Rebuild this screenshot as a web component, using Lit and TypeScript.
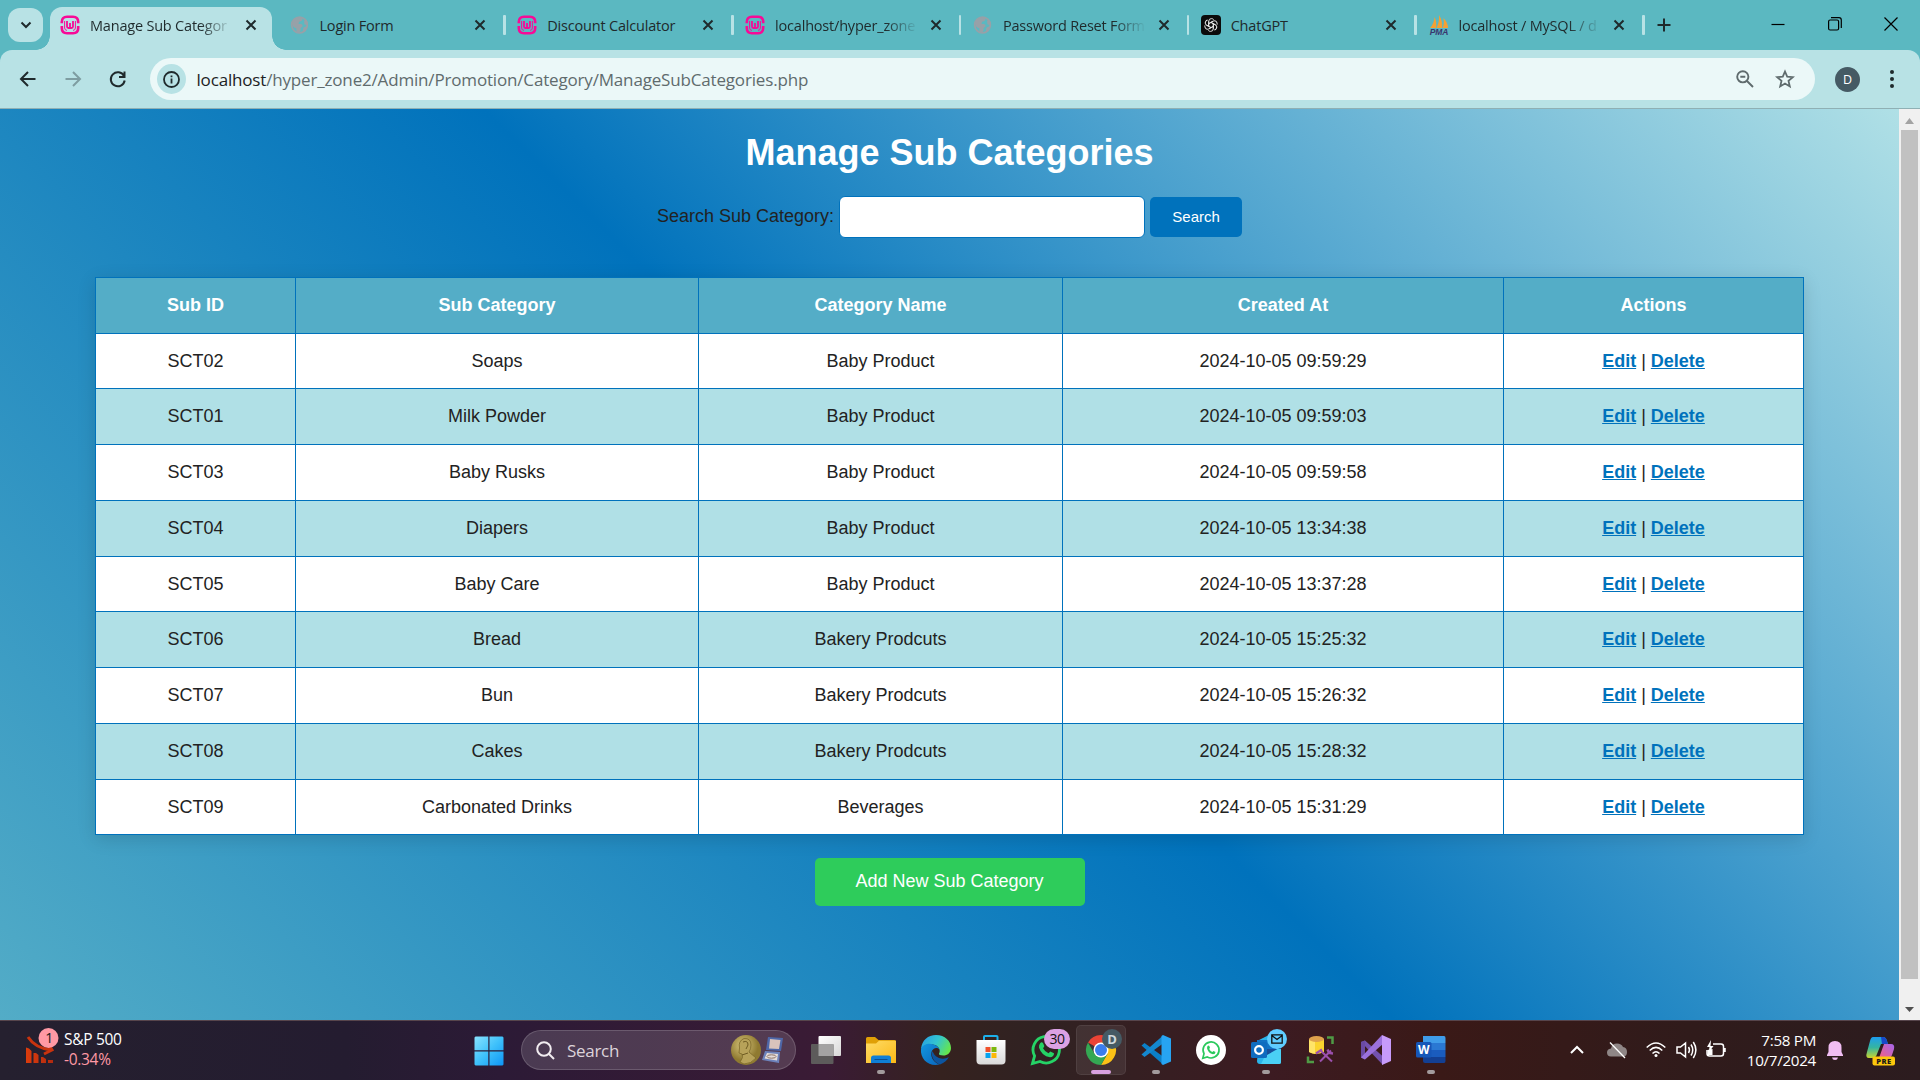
import { LitElement, html, css, svg, nothing } from 'lit';
import { customElement } from 'lit/decorators.js';

type Tab = { icon: string; title: string; fade?: boolean; active?: boolean };

const TABS: Tab[] = [
  { icon: 'wamp', title: 'Manage Sub Categor', fade: true, active: true },
  { icon: 'globe', title: 'Login Form' },
  { icon: 'wamp', title: 'Discount Calculator' },
  { icon: 'wamp', title: 'localhost/hyper_zone', fade: true },
  { icon: 'globe', title: 'Password Reset Form', fade: true },
  { icon: 'gpt', title: 'ChatGPT' },
  { icon: 'pma', title: 'localhost / MySQL / d', fade: true },
];

const ROWS = [
  ['SCT02', 'Soaps', 'Baby Product', '2024-10-05 09:59:29'],
  ['SCT01', 'Milk Powder', 'Baby Product', '2024-10-05 09:59:03'],
  ['SCT03', 'Baby Rusks', 'Baby Product', '2024-10-05 09:59:58'],
  ['SCT04', 'Diapers', 'Baby Product', '2024-10-05 13:34:38'],
  ['SCT05', 'Baby Care', 'Baby Product', '2024-10-05 13:37:28'],
  ['SCT06', 'Bread', 'Bakery Prodcuts', '2024-10-05 15:25:32'],
  ['SCT07', 'Bun', 'Bakery Prodcuts', '2024-10-05 15:26:32'],
  ['SCT08', 'Cakes', 'Bakery Prodcuts', '2024-10-05 15:28:32'],
  ['SCT09', 'Carbonated Drinks', 'Beverages', '2024-10-05 15:31:29'],
];

const stroke = (w: number, h: number, d: string, sw = 2, color = '#1f2a2c') => html`<svg
  width=${w} height=${h} viewBox="0 0 ${w} ${h}" fill="none" stroke=${color} stroke-width=${sw}><path d=${d} /></svg>`;

const FAVICONS: Record<string, unknown> = {
  wamp: html`<svg width="20" height="20" viewBox="0 0 20 20" fill="none" stroke="#f70a97">
    <path d="M1.800 8.200V7Q1.800 1.800 7 1.800H13Q18.200 1.800 18.200 7V8.200M1.800 11V13Q1.800 18.200 7 18.200H13Q18.200 18.200 18.200 13V11" stroke-width="2.600" />
    <path d="M4.600 6V13Q4.800 15.300 7 15.400M15.400 6V13Q15.200 15.300 13 15.400" stroke-width="1" />
    <path d="M7 6V11.500Q7 13 8.500 13H11.500Q13 13 13 11.500V6M10 8V13" stroke-width="1.800" />
  </svg>`,
  globe: html`<svg width="20" height="20" viewBox="0 0 20 20">
    <circle cx="9.500" cy="10" r="7.800" fill="none" stroke="#97a1a8" stroke-width="1.800" />
    <path d="M2 9Q2 4 7 2.200L12 2Q13.500 4 11.500 6L9 6.800L8.500 9H11Q13 9.300 12.500 11.500L10.500 13L10.500 15.500L9 18Q5.500 17 6.500 13.500Q3 12.500 2 9ZM14 5.500L17 5.500L17.500 10L14.500 9.500ZM13.500 12.500L17 11Q17 15.500 12.500 17.500Z" fill="#97a1a8" />
  </svg>`,
  gpt: html`<svg width="20" height="20" viewBox="0 0 20 20">
    <rect width="20" height="20" rx="4" fill="#0b0b0b" />
    <g fill="none" stroke="#e6e6e6" stroke-width=".95">
      ${[0, 60, 120, 180, 240, 300].map(
        (a) => svg`<path transform="rotate(${a} 10 10)" d="M7.700 11.300V6.200Q7.900 3.600 10.400 3.600Q11.800 3.600 12.700 4.600M7.700 8.700L12.200 6.100" />`
      )}
    </g>
  </svg>`,
  pma: html`<svg width="22" height="20" viewBox="0 0 22 20">
    <path d="M2 13Q6 9 6.500 2Q9 7 8 13ZM8.500 13Q11.500 7 11 0Q15 6 14 13ZM14.500 13Q16.500 9 15.500 3Q20 8 20 13Z" fill="#f5a033" />
    <text x="11" y="19.800" text-anchor="middle" class="pma">PMA</text>
  </svg>`,
};

const CLOSE = stroke(12, 12, 'M1.500 1.500L10.500 10.500M10.500 1.500L1.500 10.500', 2);

const ICONS: Record<string, unknown> = {
  start: html`<svg width="30" height="30" viewBox="0 0 30 30">
    <defs><linearGradient id="w" x1="0" y1="0" x2="30" y2="30" gradientUnits="userSpaceOnUse"><stop stop-color="#8be4ff" /><stop offset=".5" stop-color="#3fc1fb" /><stop offset="1" stop-color="#0c93f5" /></linearGradient></defs>
    <path d="M1.500 .5H14.300V14.300H.5V1.500ZM15.500 .5H28.500L29.500 1.500V14.300H15.500ZM.5 15.500H14.300V29.500H1.500L.5 28.500ZM15.500 15.500H29.500V28.500L28.500 29.500H15.500Z" fill="url(#w)" />
  </svg>`,
  tasks: html`<svg width="30" height="30" viewBox="0 0 30 30">
    <defs><linearGradient id="t1" x1="0" y1="0" x2="1" y2="1"><stop stop-color="#fff" /><stop offset="1" stop-color="#d8d8d8" /></linearGradient></defs>
    <rect x="7.500" y="1" width="22.500" height="20" rx="1" fill="url(#t1)" />
    <rect x="0" y="9" width="22.500" height="20" rx="1" fill="#5d5b5b" />
    <rect x="7.500" y="9" width="15" height="12" fill="#a4a3a3" />
  </svg>`,
  folder: html`<svg width="30" height="30" viewBox="0 0 30 30">
    <defs><linearGradient id="f1" x1="0" y1="0" x2="1" y2="1"><stop stop-color="#ffdc66" /><stop offset="1" stop-color="#fbb816" /></linearGradient></defs>
    <path d="M0 3.500Q0 2 1.500 2H9L12.500 5H28.500Q30 5 30 6.500V12H0Z" fill="#e0a006" />
    <path d="M0 8.500H10L13 5.800H30V28H0Z" fill="url(#f1)" />
    <path d="M5 28V23Q5 20.500 7.500 20.500H22.500Q25 20.500 25 23V28Z" fill="#0f7fd6" /><path d="M8.500 24.500H21.500" stroke="#0a4f91" />
  </svg>`,
  edge: html`<svg width="30" height="30" viewBox="0 0 30 30">
    <defs>
      <linearGradient id="e1" x1="0" y1=".2" x2="1" y2=".6"><stop stop-color="#279fe3" /><stop offset=".5" stop-color="#33c5d0" /><stop offset="1" stop-color="#66e64a" /></linearGradient>
      <linearGradient id="e2" x1="0" y1="0" x2="1" y2="1"><stop stop-color="#1297e0" /><stop offset="1" stop-color="#0a66bd" /></linearGradient>
    </defs>
    <path d="M0 14C1 5 7 0 15 0C24 0 30 6 30 13C30 18 26 20.500 22.500 20.500C19 20.500 17.500 19.500 18 18.500C19.500 16.500 19 12 14 10C9 8 3 9.500 0 14Z" fill="url(#e1)" />
    <path d="M0 14C2 9 8 8 12.500 9.500C16 10.500 18.500 13 18.500 15C17 12 12 12.500 10.500 17C9 23 14 28 18.500 29.500C8 32 -1 24.500 0 14Z" fill="url(#e2)" />
    <path d="M11 16C9.500 22 14 28 19 29.400C23.500 28 26.500 25 27.800 22C22 25.500 14.500 23 12.500 18Z" fill="#0c55a0" />
  </svg>`,
  store: html`<svg width="30" height="30" viewBox="0 0 30 30">
    <defs><linearGradient id="s1" x1="0" y1="0" x2="0" y2="1"><stop stop-color="#fff" /><stop offset="1" stop-color="#d9d9d9" /></linearGradient></defs>
    <path d="M8 6V1.800Q8 1 9 1H20.500Q21.500 1 21.500 1.800V6" fill="none" stroke="#1cb0ea" stroke-width="2" />
    <path d="M.5 5H29.500V25.500Q29.500 29.500 25.500 29.500H4.500Q.5 29.500 .5 25.500Z" fill="url(#s1)" />
    <path d="M9.500 12H14.500V17H9.500Z" fill="#f0502a" /><path d="M15.500 12H20.500V17H15.500Z" fill="#7cb80c" /><path d="M9.500 18H14.500V23H9.500Z" fill="#08a3ee" /><path d="M15.500 18H20.500V23H15.500Z" fill="#fcb808" />
  </svg>`,
  whats: html`<svg width="30" height="30" viewBox="0 0 30 30">
    <path d="M1.500 28.500L3.600 21A13.200 13.200 0 1 1 9 26.400Z" fill="none" stroke="#25d366" stroke-width="2.800" />
    <path d="M9 8.500Q10.500 6.500 12 8L13.300 11Q13.300 12 12 13.300Q14 17 17.500 18.300L19.300 16.500L23 18.300Q23 22 19 22.300Q10.500 21 8 12.500Q7.800 10 9 8.500Z" fill="#25d366" />
  </svg>`,
  chrome: html`<svg width="30" height="30" viewBox="0 0 30 30">
    <path d="M15 15L2 7.500A15 15 0 0 1 28 7.500H15Z" fill="#ea4335" /><path d="M15 7.500H28A15 15 0 0 1 15 30L21.500 18.700Z" fill="#fbc116" /><path d="M2 7.500A15 15 0 0 0 15 30L21.500 18.700L15 22L8.500 18.700Z" fill="#34a853" />
    <circle cx="15" cy="15" r="7.500" fill="#fff" /><circle cx="15" cy="15" r="6" fill="#3b7ded" />
  </svg>`,
  code: html`<svg width="30" height="30" viewBox="0 0 30 30">
    <path d="M.5 10.500L3.500 8L22 21.500V29.500Z" fill="#0b7fc7" /><path d="M.5 19.500L3.500 22L22 8.500V.5Z" fill="#1488cf" /><path d="M22 0L30 3.500V26.500L22 30L20.500 29V1Z" fill="#27a4f2" />
  </svg>`,
  whatsWhite: html`<svg width="30" height="30" viewBox="0 0 30 30">
    <circle cx="15" cy="15" r="15" fill="#fff" />
    <path d="M6.800 23.200L8 18.700A8 8 0 1 1 11.300 22Z" fill="none" stroke="#2bc95c" stroke-width="1.700" />
    <path d="M11.500 11Q12.500 10 13.300 11L14 12.700L13.200 14Q14.500 16.300 16.300 17L17.500 16L19.500 17Q19.500 19.300 17 19.300Q12 18.500 11 13Z" fill="#2bc95c" />
  </svg>`,
  outlook: html`<svg width="30" height="30" viewBox="0 0 30 30">
    <path d="M8 5L18 0L30 7V27Q30 29 28 29H9Q6 29 6 26Z" fill="#2ab4ea" /><path d="M6 5H26V19H6Z" fill="#1272c4" /><path d="M15 19L30 11V27Q30 29 28 29H10Z" fill="#4ad0f5" /><path d="M15 14H30V12L16 20Z" fill="#174f9a" />
    <rect x="0" y="7" width="16" height="16" rx="1.500" fill="#0f6cbf" /><circle cx="8" cy="15" r="3.900" fill="none" stroke="#fff" stroke-width="2.200" />
  </svg>`,
  sql: html`<svg width="30" height="30" viewBox="0 0 30 30">
    <path d="M3 4V17Q10 21 18 17V4Z" fill="#fbd32d" /><path d="M3 4V17Q6 18.500 9 18.800V4Z" fill="#ffe468" /><ellipse cx="10.500" cy="4" rx="7.500" ry="3" fill="#dea14c" />
    <path d="M21 2.500H26.500V9M8 27H2V21.500" fill="none" stroke="#4f9b45" stroke-width="2.500" /><path d="M15 16L26 26.500M14 26.500L25 15.500" fill="none" stroke="#9b50ad" stroke-width="2" /><path d="M10 18.500L16 14.500M21.500 14.500L23 18L27 18.500" fill="none" stroke="#9b50ad" stroke-width="2.400" />
  </svg>`,
  vs: html`<svg width="30" height="30" viewBox="0 0 30 30">
    <path d="M0 7L4 5.500L22 21.500V30Z" fill="#7351ae" /><path d="M0 7L4 5.500V24.500L0 22.500Z" fill="#6a4aa4" /><path d="M0 22.500L21 0L22 9L4 24.500Z" fill="#9b71dc" /><path d="M21 0L30 4V26L21 30Z" fill="#c79bfa" />
  </svg>`,
  word: html`<svg width="30" height="30" viewBox="0 0 30 30">
    <path d="M7 1H28Q29.500 1 29.500 3V8H7Z" fill="#3f9ce9" /><path d="M7 8H29.500V15H7Z" fill="#2a78d3" /><path d="M7 15H29.500V22H7Z" fill="#1a5cbe" /><path d="M7 22H29.500V26Q29.500 28 28 28H9Q7 28 7 26Z" fill="#133f92" />
    <rect x="0" y="7" width="15.500" height="15.500" rx="1.500" fill="#1657b8" /><text x="7.800" y="18.800" text-anchor="middle" class="word">W</text>
  </svg>`,
};

const TASKS: { icon: string; badge?: string; run?: boolean; active?: boolean }[] = [
  { icon: 'tasks' },
  { icon: 'folder', run: true },
  { icon: 'edge' },
  { icon: 'store' },
  { icon: 'whats', badge: '30' },
  { icon: 'chrome', badge: 'D', run: true, active: true },
  { icon: 'code', run: true },
  { icon: 'whatsWhite' },
  { icon: 'outlook', badge: 'mail', run: true },
  { icon: 'sql' },
  { icon: 'vs' },
  { icon: 'word', run: true },
];

@customElement('app-root')
export class AppRoot extends LitElement {
  static styles = css`
    :host { display: flex; flex-direction: column; width: 1920px; height: 1080px; overflow: hidden; font-family: 'Open Sans', 'Noto Sans', sans-serif; color: #1f2a2c; }
    * { box-sizing: border-box; }
    svg { display: block; flex: none; overflow: visible; }
    .strip { display: flex; height: 50px; flex: none; background: #5bb8c1; padding: 7px 0 0 8px; }
    .drop { width: 35px; height: 34px; margin: 1px 7px 0 0; border-radius: 12px; background: #b8e2e5; display: flex; align-items: center; justify-content: center; flex: none; }
    .tab { position: relative; display: flex; align-items: center; width: 227.8px; height: 43px; flex: none; padding: 0 21px 7px 10px; font-size: 14.500px; letter-spacing: -0.2px; }
    .tab.active { width: 221.500px; margin-right: 8px; background: #b8e2e5; border-radius: 12px 12px 0 0; padding-right: 14.500px; }
    .tab.active::before, .tab.active::after { content: ''; position: absolute; bottom: 0; width: 14px; height: 14px; }
    .tab.active::before { left: -14px; background: radial-gradient(circle at 0 0, transparent 13.500px, #b8e2e5 14px); }
    .tab.active::after { right: -14px; background: radial-gradient(circle at 100% 0, transparent 13.500px, #b8e2e5 14px); }
    .fav { width: 22px; flex: none; }
    .title { flex: 1; padding: 2px 0 0 8px; white-space: nowrap; line-height: 20px; }
    .title.fade { -webkit-mask-image: linear-gradient(90deg, #000 118px, transparent 151px); mask-image: linear-gradient(90deg, #000 118px, transparent 151px); }
    .sep { width: 2.500px; height: 20px; margin: 8px 1.500px 0 -4px; border-radius: 1px; background: #b8e2e5; flex: none; }
    .plus { margin: 11px 0 0 10.500px; }
    .controls { display: flex; gap: 42.500px; margin: 10px 22px 0 auto; }
    .pma { font: italic 900 8.500px 'Liberation Sans', sans-serif; fill: #39366f; }
    .word { font: bold 12px 'Open Sans', sans-serif; fill: #fff; }
    .bar { display: flex; align-items: center; height: 59px; flex: none; background: #b8e2e5; border-bottom: 1px solid #8fb0b4; padding: 0 26px 0 20px; border-radius: 12px 12px 0 0; }
    .chrome { flex: none; background: #5bb8c1; }
    .nav { display: flex; gap: 29px; width: 130px; flex: none; }
    .omni { flex: 1; display: flex; align-items: center; height: 42px; border-radius: 21px; background: #ebf8f8; padding: 0 21px 0 7px; }
    .info { width: 29px; height: 30px; border-radius: 50%; background: #b8e2e5; display: flex; align-items: center; justify-content: center; }
    .url { flex: 1; margin-left: 10.500px; font-size: 17px; letter-spacing: -.17px; color: #5f6b6d; white-space: nowrap; }
    .url b { font-weight: 400; color: #1c2224; }
    .omniIcons { display: flex; gap: 22px; }
    .avatar { width: 25px; height: 25px; margin: 0 30px 0 20px; border-radius: 50%; background: #455a64; color: #fff; font-size: 12.500px; line-height: 25px; text-align: center; }
    .view { display: flex; flex: 1; min-height: 0; }
    .page { flex: 1; display: flex; flex-direction: column; align-items: center; background: linear-gradient(45deg, #54adc7, #0072bc, #b0e0e6); background-size: 100% 932px; font-family: 'Liberation Sans', Arial, sans-serif; font-size: 18px; color: #222; letter-spacing: 0; }
    h1 { margin: 23px 0 0; font-size: 36px; line-height: 42px; color: #fff; font-weight: bold; }
    .form { display: flex; align-items: center; height: 42px; margin-top: 22px; }
    .label { margin-right: 5px; padding-bottom: 2px; }
    .input { width: 306px; height: 42px; border: 1px solid #0072bc; border-radius: 6px; background: #fff; }
    .btn { width: 92px; height: 40px; margin-left: 5px; border-radius: 5px; background: #0072bc; color: #fff; font-size: 15px; line-height: 40px; text-align: center; }
    table { width: 1709px; flex: none; margin-top: 39px; border-collapse: collapse; table-layout: fixed; box-shadow: 0 4px 17px rgba(0, 0, 0, .13); background: #fff; }
    th, td { border: 1px solid #0072bc; padding: 0; text-align: center; }
    th { background: #54adc7; color: #fff; }
    tr { height: 56px; }
    tr:nth-child(2), tr:nth-child(6), tr:nth-child(10) { height: 55px; }
    .c1 { width: 200px; } .c2 { width: 403px; } .c3 { width: 364px; } .c4 { width: 441px; }
    .alt { background: #b0e0e6; }
    a { color: #0072bc; font-weight: bold; text-decoration: underline; }
    .add { width: 270px; height: 48px; flex: none; margin-top: 23px; border-radius: 5px; background: #2ecc5b; color: #fff; text-align: center; line-height: 46px; }
    .scroll { width: 21px; display: flex; flex-direction: column; align-items: center; background: #f0f0f0; padding-top: 9px; flex: none; }
    .thumb { width: 17px; height: 849px; margin: 6px 0 28px; background: #c1c1c1; flex: none; }
    .task { display: flex; height: 60px; flex: none; border-top: 1px solid #57454c; padding-left: 25px; color: #fff; background: linear-gradient(90deg, #25202f 0, #241c30 18%, #2c1a36 26%, #3a1b35 43%, #35221f 49%, #302222 54%, #3c1b22 66%, #3a1917 75%, #301b1b 88%, #2c1c1f 100%); }
    .stock { position: relative; width: 449px; padding: 8px 0 0 39px; font-size: 15.500px; line-height: 20px; letter-spacing: -.3px; }
    .stock svg { position: absolute; left: 0; top: 7px; }
    .loss { color: #ff99a4; }
    .start { margin-top: 15px; width: 47px; }
    .find { display: flex; align-items: center; width: 275px; height: 40px; margin: 9px 0 0; border-radius: 20px; border: 1px solid rgba(255, 255, 255, .16); background: rgba(255, 255, 255, .14); padding: 0 12px 0 14px; font-size: 17px; letter-spacing: -.3px; color: #ddd3da; }
    .find span { flex: 1; margin-left: 12px; }
    .apps { display: flex; margin-left: 5px; }
    .app { position: relative; width: 50px; height: 50px; margin: 4px 5px 0 0; padding: 10px; border-radius: 5px; }
    .app.active { background: rgba(255, 255, 255, .08); box-shadow: inset 0 0 0 1px rgba(255, 255, 255, .07); }
    .dot { position: absolute; left: 21px; bottom: 1px; width: 8px; height: 4px; border-radius: 2px; background: #a39b9d; }
    .active .dot { left: 15px; width: 20px; background: #d9a1e0; }
    .badge { position: absolute; top: 4px; left: 26px; height: 20px; width: 20px; border-radius: 10px; background: #455a64; color: #cfd8dc; font-size: 13px; font-weight: bold; line-height: 20px; text-align: center; }
    .badge.b30 { left: 23px; width: 26px; background: #dba1e4; color: #111; font-weight: 400; font-size: 14px; letter-spacing: -.5px; }
    .badge.bmail { background: #60cdff; left: 26px; padding: 5px 4px; }
    .tray { display: flex; align-items: flex-start; margin: 0 24px 0 auto; }
    .tray svg { margin-top: 17px; }
    .clock { width: 86px; margin-right: 11px; padding-top: 9px; font-size: 15.200px; line-height: 20px; letter-spacing: -.3px; text-align: right; white-space: nowrap; }
    .pre { font: 900 7.500px 'Open Sans', sans-serif; fill: #1a1a1a; letter-spacing: .5px; }
  `;

  private tab(t: Tab) {
    return html`<div class="tab ${t.active ? 'active' : ''}">
      <div class="fav">${FAVICONS[t.icon]}</div>
      <div class="title ${t.fade ? 'fade' : ''}">${t.title}</div>
      ${CLOSE}
    </div>`;
  }

  private badge(b?: string) {
    if (!b) return nothing;
    if (b === 'mail')
      return html`<div class="badge bmail">${stroke(12, 10, 'M.8 .8H11.200V9.200H.8ZM.8 1.500L6 5.500L11.200 1.500', 1.3, '#111')}</div>`;
    return html`<div class="badge ${b === '30' ? 'b30' : ''}">${b}</div>`;
  }

  render() {
    return html`
      <div class="strip">
        <div class="drop">${stroke(12, 8, 'M1.500 1.500L6 6L10.500 1.500', 2)}</div>
        ${TABS.map((t, i) => html`${this.tab(t)}${i > 0 ? html`<div class="sep"></div>` : nothing}`)}
        <div class="plus">${stroke(14, 14, 'M7 .5V13.500M.5 7H13.500', 2)}</div>
        <div class="controls">
          ${stroke(14, 14, 'M.5 7.500H13.500', 1.2, '#000')}
          <svg width="14" height="14" viewBox="0 0 14 14" fill="none" stroke="#000" stroke-width="1.200"><rect x=".6" y="3" width="10" height="10" rx="1.500" /><path d="M3 .7H11Q13.300 .7 13.300 3V11" /></svg>
          ${stroke(14, 14, 'M.5 .5L13.500 13.500M13.500 .5L.5 13.500', 1.2, '#000')}
        </div>
      </div>
      <div class="chrome"><div class="bar">
        <div class="nav">
          ${stroke(16, 16, 'M15.500 8H1.500M8 1L1 8L8 15', 2)}
          ${stroke(16, 16, 'M.5 8H14.500M8 1L15 8L8 15', 2, '#7e9da1')}
          ${stroke(16, 16, 'M14 5A7 7 0 1 0 14.700 9.500M14.500 .5V6H9', 2)}
        </div>
        <div class="omni">
          <div class="info"><svg width="17" height="17" viewBox="0 0 17 17" fill="none" stroke="#1f2a2c" stroke-width="1.800"><circle cx="8.500" cy="8.500" r="7.500" /><path d="M8.500 7.500V12.500M8.500 4.500V6.200" /></svg></div>
          <div class="url"><b>localhost</b>/hyper_zone2/Admin/Promotion/Category/ManageSubCategories.php</div>
          <div class="omniIcons">
            <svg width="18" height="18" viewBox="0 0 18 18" fill="none" stroke="#5f6b6d" stroke-width="1.900"><circle cx="6.800" cy="6.800" r="5.600" /><path d="M11 11L17 17M4.300 6.800H9.300" /></svg>
            <svg width="18" height="18" viewBox="0 0 18 18" fill="none" stroke="#5f6b6d" stroke-width="1.800"><path d="M9 1.500L11.200 6.700L16.800 7.200L12.500 10.900L13.800 16.400L9 13.500L4.200 16.400L5.500 10.900L1.200 7.200L6.800 6.700Z" /></svg>
          </div>
        </div>
        <div class="avatar">D</div>
        <svg width="4" height="18" viewBox="0 0 4 18" fill="#1f2a2c"><circle cx="2" cy="2" r="2" /><circle cx="2" cy="9" r="2" /><circle cx="2" cy="16" r="2" /></svg>
      </div></div>
      <div class="view">
        <div class="page">
          <h1>Manage Sub Categories</h1>
          <div class="form"><div class="label">Search Sub Category:</div><div class="input"></div><div class="btn">Search</div></div>
          <table>
            <tr><th class="c1">Sub ID</th><th class="c2">Sub Category</th><th class="c3">Category Name</th><th class="c4">Created At</th><th>Actions</th></tr>
            ${ROWS.map((r, i) => html`<tr class=${i % 2 ? 'alt' : ''}>${r.map((c) => html`<td>${c}</td>`)}<td><a>Edit</a> | <a>Delete</a></td></tr>`)}
          </table>
          <div class="add">Add New Sub Category</div>
        </div>
        <div class="scroll">
          <svg width="9" height="6" viewBox="0 0 9 6" fill="#a3a3a3"><path d="M4.500 0L9 6H0Z" /></svg>
          <div class="thumb"></div>
          <svg width="9" height="5" viewBox="0 0 9 5" fill="#505050"><path d="M4.500 5L9 0H0Z" /></svg>
        </div>
      </div>
      <div class="task">
        <div class="stock">
          <svg width="33" height="36" viewBox="0 0 33 36">
            <defs><linearGradient id="r" x1="0" y1="0" x2="1" y2="0"><stop stop-color="#dc3c0c" /><stop offset="1" stop-color="#b02a10" /></linearGradient></defs>
            <path d="M1 19.500L4 20.500L6.500 23V35H1ZM8.500 25H11L13.500 27V35H8.500ZM16 29H18L21 31V35H16ZM23 32H28V35H23Z" fill="url(#r)" /><path d="M3 9Q10 20 26 22M19 26L27 22L24 17" fill="none" stroke="#c9330e" stroke-width="3" />
            <circle cx="23.500" cy="10" r="10" fill="#ff99a4" /><text x="24" y="15" text-anchor="middle" font-size="14" fill="#1a1a1a">1</text>
          </svg>
          <div>S&amp;P 500</div><div class="loss">-0.34%</div>
        </div>
        <div class="start">${ICONS.start}</div>
        <div class="find">
          <svg width="19" height="19" viewBox="0 0 19 19" fill="none" stroke="#f1ecf0" stroke-width="2"><circle cx="8" cy="8" r="6.800" /><path d="M13 13L18 18" /></svg>
          <span>Search</span>
          <svg width="54" height="32" viewBox="0 0 54 32">
            <defs><radialGradient id="g" cx=".4" cy=".35"><stop stop-color="#d8c67e" /><stop offset="1" stop-color="#8f7a30" /></radialGradient></defs>
            <circle cx="17" cy="16" r="15" fill="url(#g)" /><path d="M11 28Q15 23 13 20L10 19L10.500 14Q9 7 15 4.500Q22 4 22 11Q22 15 20 18L27 24Q22 30 15 30Z" fill="#b7a259" stroke="#7c692b" stroke-width=".8" /><path d="M14 8Q19 6 19 11L17 15M13 21L19 19" stroke="#6e5b22" fill="none" stroke-width="1" />
            <path d="M39 3L54 4L52 17L37 16Z" fill="#4e67a8" /><path d="M41 5L51.500 6L50 15L40 14.500Z" fill="#d9c4bc" /><path d="M36 17L51 18L50 29L33 26Z" fill="#6d82ba" /><path d="M38 19L49 20L48 26.500L35.500 24.500Z" fill="#e4dcd8" /><ellipse cx="42.500" cy="22.500" rx="4.500" ry="1.700" fill="none" stroke="#8d7468" />
          </svg>
        </div>
        <div class="apps">
          ${TASKS.map((t) => html`<div class="app ${t.active ? 'active' : ''}">${ICONS[t.icon]}${this.badge(t.badge)}${t.run ? html`<div class="dot"></div>` : nothing}</div>`)}
        </div>
        <div class="tray">
          <svg width="37" height="26" viewBox="0 0 37 26" fill="none" stroke="#fff" stroke-width="2"><path d="M1 15L7 9L13 15" /></svg>
          <svg width="39" height="26" viewBox="0 0 39 26"><path d="M4 18.500Q0 18.500 0 14.500Q0 11 4 10.500Q5 5.500 10 5.500Q14.500 5.500 16 9Q20 9.500 20 14Q20 18.500 16 18.500Z" fill="#8f8686" /><path d="M3 4.500L18 20" stroke="#fff" stroke-width="1.300" /></svg>
          <svg width="30" height="26" viewBox="0 0 30 26" fill="none" stroke="#fff" stroke-width="1.500"><path d="M.7 9.500Q10 .5 19.300 9.500M3.700 12.500Q10 6.300 16.300 12.500M6.500 15.500Q10 12 13.500 15.500" /><circle cx="10" cy="17.500" r="1.500" fill="#fff" stroke="none" /></svg>
          <svg width="30" height="26" viewBox="0 0 30 26" fill="none" stroke="#fff" stroke-width="1.500"><path d="M1 9H4.500L9.500 5V19L4.500 15H1ZM12.500 9Q14.500 12 12.500 15M15 6.500Q18.500 12 15 17.500M17.300 4Q22.500 12 17.300 20" /></svg>
          <svg width="24" height="26" viewBox="0 0 24 26" fill="none" stroke="#fff" stroke-width="1.500"><path d="M7 6H15Q17.500 6 17.500 8.500V15.500Q17.500 18 15 18H3.500Q1 18 1 15.500V12M19 10V14" /><path d="M5 2L1 9H3.500L2.500 15L7.500 8H4.500ZM1.500 12V17H6.500V11Z" fill="#fff" stroke="none" /></svg>
          <div class="clock"><div>7:58 PM</div><div>10/7/2024</div></div>
          <svg width="39" height="26" viewBox="0 0 39 26" fill="#f1bdf3"><path d="M0 17L1.500 14V9.500Q1.500 3 8 3Q14.500 3 14.500 9.500V14L16 17V18H0ZM5 19.500H11Q10.500 22 8 22Q5.500 22 5 19.500Z" /></svg>
          <svg width="30" height="30" viewBox="0 0 30 30">
            <defs><linearGradient id="c1" x1="0" y1="0" x2="0" y2="1"><stop stop-color="#1d9df0" /><stop offset=".5" stop-color="#35b5a0" /><stop offset="1" stop-color="#c8d52f" /></linearGradient><linearGradient id="c2" x1="1" y1="0" x2="0" y2="1"><stop stop-color="#a566ee" /><stop offset="1" stop-color="#f2607e" /></linearGradient></defs>
            <path d="M7 -1H17Q20 -1 21 3L22 6H15L11 16Q10 20 6 20H3Q-1 20 1 14L4 3Q5 -1 7 -1Z" fill="url(#c1)" /><path d="M15 -1H17Q20 -1 21 3L22 6H16Z" fill="#1748c8" /><path d="M18 6H25Q29 6 28 11L26 17Q25 20 22 20H13Z" fill="url(#c2)" />
            <rect x="6.500" y="18.500" width="22.500" height="9" rx="2" fill="#fcc70c" /><text x="18" y="25.800" text-anchor="middle" class="pre">PRE</text>
          </svg>
        </div>
      </div>
    `;
  }
}
